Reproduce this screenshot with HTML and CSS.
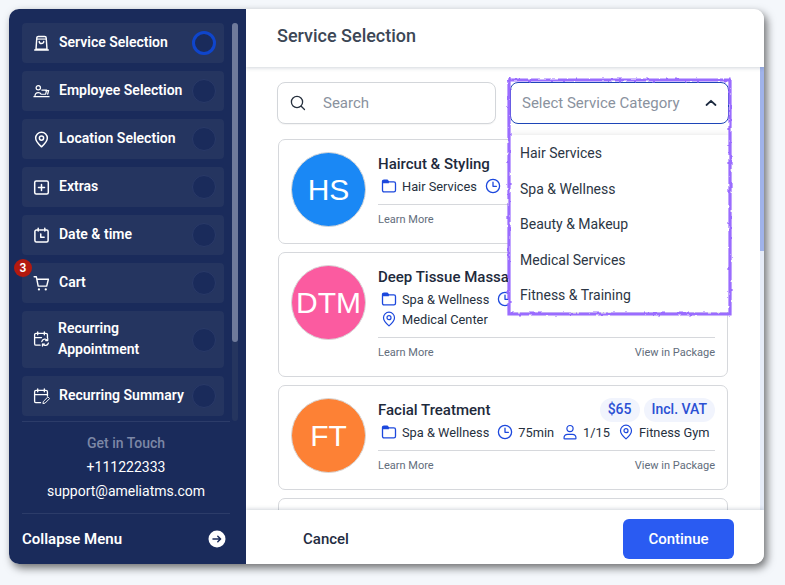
FILE: index.html
```html
<!DOCTYPE html>
<html lang="en">
<head>
<meta charset="utf-8">
<title>Service Selection</title>
<link rel="stylesheet" href="styles.css">
</head>
<body>
<svg class="defs" width="0" height="0" aria-hidden="true">
  <defs>
    <filter id="rough" x="-5%" y="-5%" width="110%" height="110%">
      <feTurbulence type="fractalNoise" baseFrequency="0.18" numOctaves="2" seed="4"/>
      <feDisplacementMap in="SourceGraphic" scale="3"/>
    </filter>
    <symbol id="i-folder" viewBox="0 0 16 16"><path d="M1.500 3.600c0-.9.600-1.500 1.500-1.500h3.200l1.700 1.800h5c.9 0 1.600.7 1.600 1.600v6.800c0 .9-.7 1.600-1.600 1.600H3c-.9 0-1.500-.7-1.500-1.600z" fill="none" stroke="currentColor" stroke-width="1.300"/><path d="M1.500 3.600c0-.9.600-1.500 1.500-1.500h3.200l1.700 1.800v1.400H1.500z" fill="currentColor"/></symbol>
    <symbol id="i-clock" viewBox="0 0 16 16"><circle cx="8" cy="8" r="6.600" fill="none" stroke="currentColor" stroke-width="1.300"/><path d="M8 4.200V8.300h3.400" fill="none" stroke="currentColor" stroke-width="1.300" stroke-linecap="round" stroke-linejoin="round"/></symbol>
    <symbol id="i-user" viewBox="0 0 16 16"><circle cx="8" cy="4.600" r="3.100" fill="none" stroke="currentColor" stroke-width="1.200"/><path d="M2 14.200c0-2.600 1.600-3.900 3.600-3.900h4.800c2 0 3.600 1.300 3.600 3.900 0 .5-.3.7-.8.7H2.800c-.5 0-.8-.2-.8-.7z" fill="none" stroke="currentColor" stroke-width="1.200"/></symbol>
    <symbol id="i-pin" viewBox="0 0 16 16"><path d="M8 14.900C5.500 12.700 2.500 10 2.500 6.700a5.500 5.500 0 0 1 11 0C13.500 10 10.500 12.700 8 14.900z" fill="none" stroke="currentColor" stroke-width="1.200" stroke-linejoin="round"/><circle cx="8" cy="6.700" r="2" fill="none" stroke="currentColor" stroke-width="1.200"/></symbol>
  </defs>
</svg>

<div class="window">
  <aside class="sidebar">
    <div class="steps-area">
      <ul class="steps">
        <li class="step">
          <svg class="step-icon" viewBox="0 0 18 18"><path d="M4 3.200C4 2 4.800 1.500 5.700 1.500h6.600c.9 0 1.700.5 1.700 1.700l.8 11.800H3.200zM1.800 15.800h14.400" fill="none" stroke="currentColor" stroke-width="1.500" stroke-linecap="round" stroke-linejoin="round"/><path d="M6.600 6.800c0 3 4.800 3 4.800 0" fill="none" stroke="currentColor" stroke-width="1.500" stroke-linecap="round"/><path d="M4.200 4.300h9.600" stroke="currentColor" stroke-width="1.200"/></svg>
          <span class="step-label">Service Selection</span>
          <span class="dot dot-active"></span>
        </li>
        <li class="step">
          <svg class="step-icon" viewBox="0 0 18 18"><circle cx="5.600" cy="5" r="2.300" fill="none" stroke="currentColor" stroke-width="1.300"/><path d="M1 14.500h16M2 14.500c0-3 1.400-4.300 3.600-4.300 1.500 0 2.500.6 3 1.700h4.800l1-4.400H9.400" fill="none" stroke="currentColor" stroke-width="1.300" stroke-linecap="round" stroke-linejoin="round"/><path d="M13.500 8h3l-1 3.900" fill="none" stroke="currentColor" stroke-width="1.300" stroke-linecap="round"/></svg>
          <span class="step-label">Employee Selection</span>
          <span class="dot"></span>
        </li>
        <li class="step">
          <svg class="step-icon" viewBox="0 0 16 16"><path d="M8 14.900C5.500 12.700 2.500 10 2.500 6.700a5.500 5.500 0 0 1 11 0C13.500 10 10.500 12.700 8 14.900z" fill="none" stroke="currentColor" stroke-width="1.400" stroke-linejoin="round"/><circle cx="8" cy="6.700" r="2" fill="none" stroke="currentColor" stroke-width="1.400"/></svg>
          <span class="step-label">Location Selection</span>
          <span class="dot"></span>
        </li>
        <li class="step">
          <svg class="step-icon" viewBox="0 0 18 18"><rect x="1.800" y="2.200" width="14.400" height="13.600" rx="1.600" fill="none" stroke="currentColor" stroke-width="1.600"/><path d="M9 5.800v6.400M5.800 9h6.400" stroke="currentColor" stroke-width="1.600" stroke-linecap="round"/></svg>
          <span class="step-label">Extras</span>
          <span class="dot"></span>
        </li>
        <li class="step">
          <svg class="step-icon" viewBox="0 0 18 18"><path d="M5.500 1.200v3M12.500 1.200v3M5 3.200H3.600C2.700 3.200 2 3.900 2 4.800v9.400c0 .9.700 1.600 1.600 1.600h10.800c.9 0 1.600-.7 1.600-1.600V4.800c0-.9-.7-1.600-1.600-1.600H13M7 3.200h4" fill="none" stroke="currentColor" stroke-width="1.600" stroke-linecap="round"/><path d="M8.200 7.500v3.300h3.600" fill="none" stroke="currentColor" stroke-width="1.600" stroke-linecap="round" stroke-linejoin="round"/></svg>
          <span class="step-label">Date &amp; time</span>
          <span class="dot"></span>
        </li>
        <li class="step">
          <span class="cart-badge">3</span>
          <svg class="step-icon" viewBox="0 0 18 18"><path d="M1.200 1.800h2.300l2 10h9l1.800-7.300H3.900" fill="none" stroke="currentColor" stroke-width="1.500" stroke-linecap="round" stroke-linejoin="round"/><circle cx="6.300" cy="15.300" r="1.200" fill="currentColor"/><circle cx="13.500" cy="15.300" r="1.200" fill="currentColor"/></svg>
          <span class="step-label">Cart</span>
          <span class="dot"></span>
        </li>
        <li class="step step-tall">
          <svg class="step-icon" viewBox="0 0 18 18"><path d="M5 1v3M12 1v3M7.500 15H3.300C2.400 15 1.700 14.300 1.700 13.400V4.100C1.700 3.200 2.400 2.500 3.300 2.500h10.400c.9 0 1.600.7 1.600 1.600v3M2 7h7" fill="none" stroke="currentColor" stroke-width="1.400" stroke-linecap="round"/><path d="M9.300 11.200a3.400 3.400 0 0 1 6-1.300M16.300 12.700a3.400 3.400 0 0 1-6 1.300" fill="none" stroke="currentColor" stroke-width="1.300" stroke-linecap="round"/><path d="M15.600 7.900v2.200h-2.200M10 16v-2.200h2.200" fill="none" stroke="currentColor" stroke-width="1.300" stroke-linecap="round" stroke-linejoin="round"/></svg>
          <span class="step-label step-label-wrap">Recurring<br>Appointment</span>
          <span class="dot"></span>
        </li>
        <li class="step">
          <svg class="step-icon" viewBox="0 0 18 18"><path d="M5 1v3M12 1v3M8 15.500H3.300c-.9 0-1.600-.7-1.600-1.600V4.100c0-.9.700-1.600 1.600-1.600h10.400c.9 0 1.600.7 1.600 1.600v4.500M2 7h13" fill="none" stroke="currentColor" stroke-width="1.400" stroke-linecap="round"/><path d="M10.500 16.500l.5-2.300 4.800-4.800 1.800 1.800-4.800 4.800z" fill="none" stroke="currentColor" stroke-width="1" stroke-linejoin="round"/></svg>
          <span class="step-label">Recurring Summary</span>
          <span class="dot"></span>
        </li>
      </ul>
      <div class="side-track"><div class="side-thumb"></div></div>
    </div>

    <div class="contact">
      <div class="contact-title">Get in Touch</div>
      <div>+111222333</div>
      <div>support@ameliatms.com</div>
    </div>

    <div class="collapse">
      <span>Collapse Menu</span>
      <svg class="collapse-icon" viewBox="0 0 18 18"><circle cx="9" cy="9" r="8.500" fill="#fff"/><path d="M5 9h7.500M9.800 6.200 12.600 9l-2.800 2.800" fill="none" stroke="#1a2b5b" stroke-width="1.500" stroke-linecap="round" stroke-linejoin="round"/></svg>
    </div>
  </aside>

  <main class="main">
    <header class="main-header">Service Selection</header>

    <div class="main-body">
      <div class="content">
        <div class="filters">
          <div class="search">
            <svg class="search-icon" viewBox="0 0 16 16"><circle cx="7" cy="7" r="5.600" fill="none" stroke="currentColor" stroke-width="1.300"/><path d="M11.200 11.200l3.300 3.300" stroke="currentColor" stroke-width="1.300" stroke-linecap="round"/></svg>
            <span>Search</span>
          </div>
          <div class="select">
            <span>Select Service Category</span>
            <svg class="chevron" viewBox="0 0 12 8"><path d="M1.500 6 6 1.800 10.500 6" fill="none" stroke="currentColor" stroke-width="1.800" stroke-linecap="round" stroke-linejoin="round"/></svg>
            <ul class="dropdown">
              <li>Hair Services</li>
              <li>Spa &amp; Wellness</li>
              <li>Beauty &amp; Makeup</li>
              <li>Medical Services</li>
              <li>Fitness &amp; Training</li>
            </ul>
          </div>
        </div>

        <div class="cards">
          <article class="card">
            <div class="avatar avatar-blue">HS</div>
            <div class="card-main">
              <div class="card-top">
                <h3>Haircut &amp; Styling</h3>
              </div>
              <div class="meta">
                <span class="meta-item"><svg class="meta-icon"><use href="#i-folder"/></svg>Hair Services</span>
                <span class="meta-item"><svg class="meta-icon"><use href="#i-clock"/></svg></span>
              </div>
              <div class="card-foot"><span>Learn More</span></div>
            </div>
          </article>

          <article class="card">
            <div class="avatar avatar-pink">DTM</div>
            <div class="card-main">
              <div class="card-top">
                <h3>Deep Tissue Massa</h3>
              </div>
              <div class="meta">
                <span class="meta-item"><svg class="meta-icon"><use href="#i-folder"/></svg>Spa &amp; Wellness</span>
                <span class="meta-item"><svg class="meta-icon"><use href="#i-clock"/></svg></span>
                <span class="meta-item meta-break"><svg class="meta-icon"><use href="#i-pin"/></svg>Medical Center</span>
              </div>
              <div class="card-foot"><span>Learn More</span><span>View in Package</span></div>
            </div>
          </article>

          <article class="card">
            <div class="avatar avatar-orange">FT</div>
            <div class="card-main">
              <div class="card-top">
                <h3>Facial Treatment</h3>
                <div class="badges"><span class="badge">$65</span><span class="badge">Incl. VAT</span></div>
              </div>
              <div class="meta">
                <span class="meta-item"><svg class="meta-icon"><use href="#i-folder"/></svg>Spa &amp; Wellness</span>
                <span class="meta-item"><svg class="meta-icon"><use href="#i-clock"/></svg>75min</span>
                <span class="meta-item"><svg class="meta-icon"><use href="#i-user"/></svg>1/15</span>
                <span class="meta-item"><svg class="meta-icon"><use href="#i-pin"/></svg>Fitness Gym</span>
              </div>
              <div class="card-foot"><span>Learn More</span><span>View in Package</span></div>
            </div>
          </article>

          <article class="card card-empty"></article>
        </div>
      </div>
      <div class="main-track"><div class="main-thumb"></div></div>
    </div>

    <footer class="main-footer">
      <span class="cancel">Cancel</span>
      <span class="continue">Continue</span>
    </footer>
  </main>

  <svg class="highlight" viewBox="0 0 227 240"><path d="M3 0V237H224V3H1" fill="none" stroke="#9a6cff" stroke-width="3.200" filter="url(#rough)"/></svg>
</div>
</body>
</html>
```

FILE: styles.css
```css
* { box-sizing: border-box; }
html, body { margin: 0; padding: 0; }
body {
  width: 785px;
  height: 585px;
  padding: 9px 0 0 9px;
  background: #f4f7fb;
  font-family: Roboto, "Liberation Sans", sans-serif;
  overflow: hidden;
}
ul { list-style: none; margin: 0; padding: 0; }
h3 { margin: 0; }
.defs { position: absolute; }

.window {
  position: relative;
  display: flex;
  width: 755px;
  height: 555px;
  border-radius: 10px;
  background: #fff;
  box-shadow: 3px 4px 9px rgba(0, 0, 0, .55);
}

/* sidebar */
.sidebar {
  display: flex;
  flex-direction: column;
  flex: none;
  width: 237px;
  padding: 14px 16px 0 13px;
  background: #1a2b5b;
  border-radius: 10px 0 0 10px;
  color: #fff;
}
.steps-area {
  display: flex;
  gap: 8px;
  height: 398px;
  flex: none;
  width: 216px;
}
.steps { display: flex; flex-direction: column; gap: 8px; width: 202px; flex: none; }
.step {
  position: relative;
  display: flex;
  align-items: center;
  height: 40px;
  padding: 0 8px 0 11px;
  background: #253560;
  border-radius: 4px;
  font-size: 14px;
  font-weight: 600;
  letter-spacing: 0;
}
.step-tall { height: 57px; }
.step-icon { width: 17px; height: 17px; flex: none; margin-right: 9px; color: #fff; }
.step-label { flex: 1; white-space: nowrap; margin-top: -2px; }
.step-label-wrap { line-height: 21px; margin-left: -1px; margin-top: -2px; }
.dot {
  flex: none;
  width: 24px;
  height: 24px;
  border-radius: 50%;
  background: #1a2b5b;
  border: 1px solid #2a3a68;
}
.dot-active { border: 3.5px solid #0f45cb; }
.cart-badge {
  position: absolute;
  left: -8px;
  top: -4px;
  width: 18px;
  height: 18px;
  border-radius: 50%;
  background: #b3190f;
  color: #fff;
  font-size: 12px;
  line-height: 18px;
  text-align: center;
}
.side-track { width: 6px; background: #25355f; border-radius: 3px; flex: none; }
.side-thumb { height: 319px; background: #6f7a9b; border-radius: 3px; }

.contact {
  display: flex;
  flex-direction: column;
  align-items: center;
  width: 208px;
  height: 93px;
  padding-top: 9px;
  border-top: 1px solid #2c3c69;
  border-bottom: 1px solid #2c3c69;
  font-size: 14px;
  line-height: 24px;
}
.contact-title { color: #7c87a6; font-weight: 500; }

.collapse {
  display: flex;
  align-items: center;
  justify-content: space-between;
  width: 204px;
  height: 50px;
  font-size: 15px;
  font-weight: 600;
}
.collapse-icon { width: 18px; height: 18px; }

/* main */
.main {
  display: flex;
  flex-direction: column;
  flex: 1;
  min-width: 0;
  border-radius: 0 10px 10px 0;
  overflow: hidden;
}
.main-header {
  position: relative;
  z-index: 2;
  flex: none;
  height: 58px;
  padding: 16px 0 0 31px;
  background: #fff;
  box-shadow: 0 1px 4px rgba(26, 44, 75, .2);
  color: #3c4756;
  font-size: 18px;
  font-weight: 500;
  line-height: 22px;
}
.main-body { display: flex; flex: 1; min-height: 0; overflow: hidden; }
.content { flex: 1; min-width: 0; padding: 15px 0 0 31px; }
.main-track { flex: none; width: 4px; background: #e6ecf8; }
.main-thumb { height: 184px; background: #a0b3ea; }

.filters { display: flex; gap: 14px; width: 452px; }
.search, .select {
  display: flex;
  align-items: center;
  width: 219px;
  height: 42px;
  border-radius: 8px;
  background: #fff;
  font-size: 15px;
  color: #8a929e;
}
.search { border: 1px solid #d3d6da; padding-left: 12px; box-shadow: 0 1px 1px rgba(0, 0, 0, .04); }
.search-icon { width: 16px; height: 16px; margin-right: 17px; color: #26303e; }
.select {
  position: relative;
  z-index: 3;
  justify-content: space-between;
  border: 1px solid #1e46b8;
  padding: 0 11px 0 11px;
}
.chevron { width: 12px; height: 8px; color: #1c2a40; }
.dropdown {
  position: absolute;
  left: -1px;
  top: 52px;
  width: 219px;
  height: 177px;
  padding-top: 1px;
  background: #fff;
  box-shadow: 0 -2px 6px rgba(0, 0, 0, .06), 0 2px 4px rgba(0, 0, 0, .1);
  color: #2c3644;
  font-size: 14px;
}
.dropdown li { height: 35.500px; line-height: 35.500px; padding-left: 10px; }

.cards {
  display: flex;
  flex-direction: column;
  gap: 8px;
  width: 450px;
  margin: 15px 0 0 1px;
}
.card {
  display: flex;
  flex: none;
  gap: 12px;
  padding: 12px 12px 16px;
  border: 1px solid #d6d8dc;
  border-radius: 7px;
  background: #fff;
}
.card-empty { height: 60px; }
.avatar {
  display: flex;
  align-items: center;
  justify-content: center;
  flex: none;
  width: 75px;
  height: 75px;
  border-radius: 50%;
  border: 1px solid #d8d8d8;
  color: #fff;
  font-size: 30px;
  font-family: "Liberation Sans", Arial, sans-serif;
}
.avatar-blue { background: #1a88f5; }
.avatar-pink { background: #fb5ba0; }
.avatar-orange { background: #fd8135; }
.card-main { flex: 1; min-width: 0; }
.card-top { display: flex; align-items: center; justify-content: space-between; height: 24px; }
.card-top h3 { color: #1e2a3c; font-size: 15px; font-weight: 500; }
.badges { display: flex; gap: 4px; }
.badge {
  display: block;
  height: 24px;
  padding: 0 8px;
  border-radius: 12px;
  background: #f1f4fd;
  color: #2b50d4;
  font-size: 14px;
  font-weight: 500;
  line-height: 23px;
}
.meta {
  display: flex;
  flex-wrap: wrap;
  column-gap: 8px;
  padding: 0 0 0 3px;
  margin-bottom: 8px;
}
.meta-item {
  display: inline-flex;
  align-items: center;
  height: 20px;
  gap: 5px;
  color: #26303e;
  font-size: 12.800px;
  white-space: nowrap;
}
.meta-break { width: 100%; }
.meta-icon { width: 16px; height: 16px; flex: none; color: #1c48dd; }
.card-foot {
  display: flex;
  justify-content: space-between;
  padding-top: 8px;
  border-top: 1px solid #d6d8dc;
  color: #626d7c;
  font-size: 11px;
  line-height: 14px;
}

.main-footer {
  position: relative;
  z-index: 2;
  display: flex;
  align-items: center;
  justify-content: space-between;
  flex: none;
  height: 54px;
  padding: 4px 30px 0 57px;
  background: #fff;
  box-shadow: 0 -1px 4px rgba(26, 44, 75, .2);
  font-size: 15px;
  font-weight: 500;
}
.cancel { color: #1f2c42; }
.continue {
  display: flex;
  align-items: center;
  justify-content: center;
  width: 111px;
  height: 40px;
  border-radius: 6px;
  background: #2a5bf2;
  color: #fff;
}

.highlight {
  position: absolute;
  left: 497px;
  top: 68px;
  width: 227px;
  height: 240px;
  z-index: 5;
  pointer-events: none;
}
```
